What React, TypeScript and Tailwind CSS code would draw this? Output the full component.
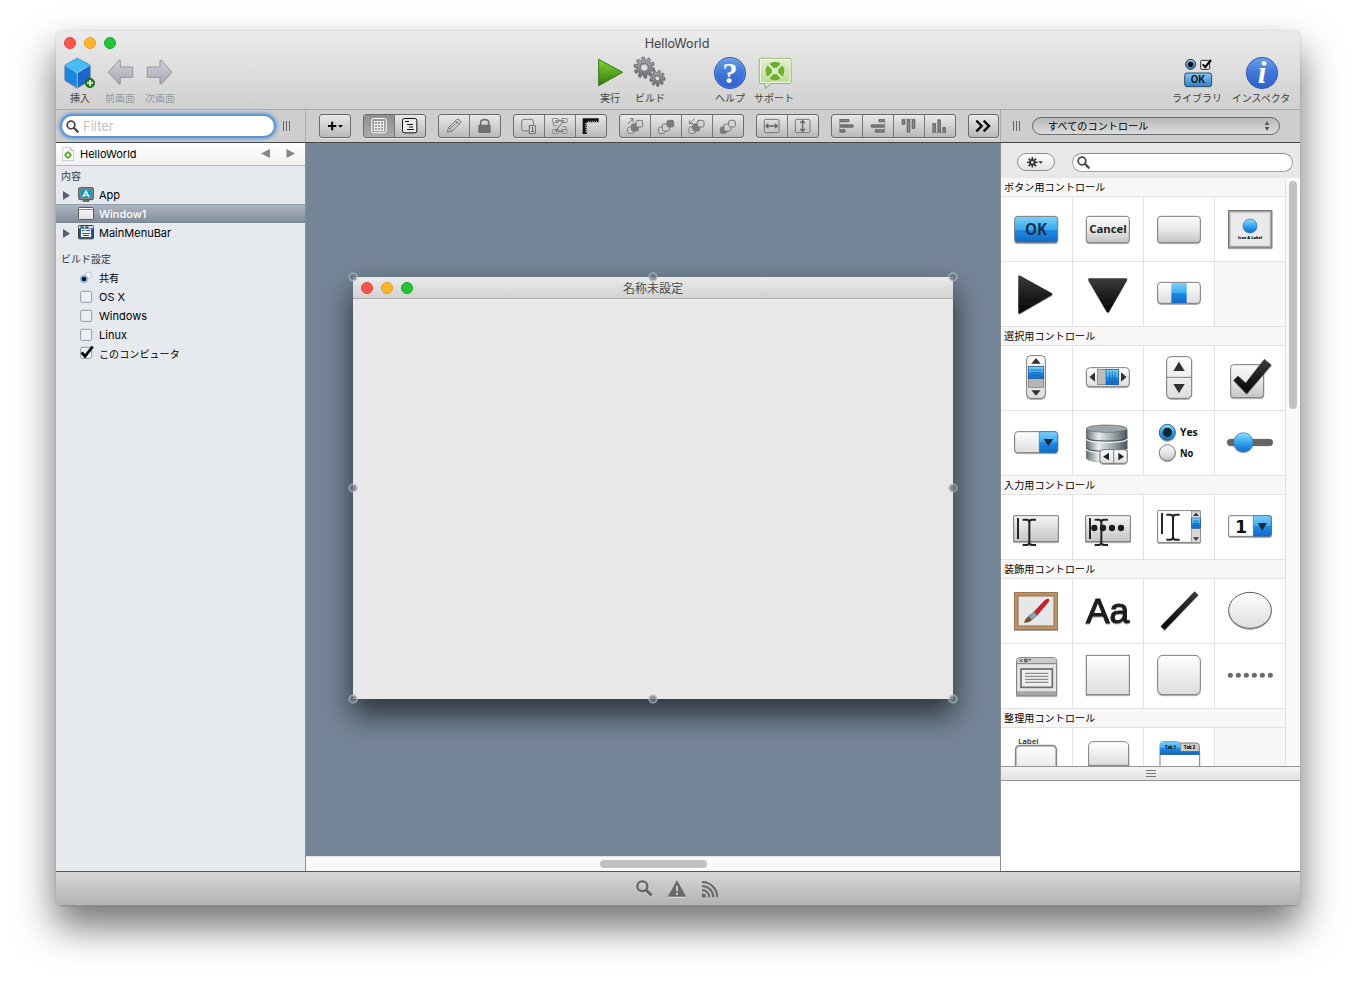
import React from "react";

/* Drawings use a unit of one third of a pixel: a 120-unit view box is 40px wide. */
function Art({ x, y, w, h, children, className = "" }: { x: number; y: number; w: number; h: number; children?: React.ReactNode; className?: string }) {
  return (
    <svg viewBox={`${x} ${y} ${w} ${h}`} width={w / 3} height={h / 3} className={"block shrink-0 " + className}>
      {children}
    </svg>
  );
}

function gearPath(cx: number, cy: number, teeth: number, r1: number, r2: number, turn = 0) {
  const pts: string[] = [];
  const step = (Math.PI * 2) / teeth;
  for (let i = 0; i < teeth; i++) {
    const a = i * step + turn;
    [[-0.3, r1], [-0.2, r2], [0.2, r2], [0.3, r1]].forEach(([k, r]) => {
      pts.push(`${(cx + Math.cos(a + k * step) * r).toFixed(1)} ${(cy + Math.sin(a + k * step) * r).toFixed(1)}`);
    });
  }
  return "M" + pts.join("L") + "Z";
}

const V = ({ id, stops }: { id: string; stops: [number, string][] }) => (
  <linearGradient id={id} x1="0" y1="0" x2="0" y2="1">
    {stops.map(([o, c], i) => <stop key={i} offset={o} stopColor={c} />)}
  </linearGradient>
);

function Gradients() {
  return (
    <svg className="absolute h-0 w-0" aria-hidden="true">
      <defs>
        <V id="blue" stops={[[0, "#7fd0f7"], [0.5, "#3aaaf0"], [0.52, "#1f8ce2"], [1, "#1268c8"]]} />
        <V id="grey" stops={[[0, "#fbfbfb"], [0.5, "#e8e8e8"], [1, "#c4c4c4"]]} />
        <V id="pale" stops={[[0, "#fefefe"], [1, "#dedede"]]} />
        <V id="black" stops={[[0, "#3a3a3a"], [1, "#050505"]]} />
        <V id="arrow" stops={[[0, "#cfcfd8"], [1, "#a9a9b6"]]} />
        <V id="green" stops={[[0, "#7fd335"], [0.5, "#58a820"], [1, "#2f7c0c"]]} />
        <V id="badge" stops={[[0, "#6ba0e4"], [0.5, "#3f77d8"], [1, "#3160cc"]]} />
        <V id="gear" stops={[[0, "#a9adb2"], [1, "#6d7278"]]} />
        <V id="support" stops={[[0, "#e5efcf"], [1, "#b4d48a"]]} />
        <V id="ok" stops={[[0, "#8cc9ee"], [1, "#2f7ec6"]]} />
        <V id="knob" stops={[[0, "#8fe0fb"], [0.5, "#36a6ee"], [1, "#1469cc"]]} />
        <V id="bar" stops={[[0, "#f6f6f6"], [1, "#c4c4c4"]]} />
        <linearGradient id="metal"><stop offset="0" stopColor="#5f696d" /><stop offset="0.3" stopColor="#e9eeef" /><stop offset="0.6" stopColor="#a9b1b4" /><stop offset="1" stopColor="#4b5558" /></linearGradient>
        <filter id="drop" x="-20%" y="-20%" width="140%" height="150%"><feDropShadow dx="0" dy="3" stdDeviation="2" floodOpacity="0.35" /></filter>
      </defs>
    </svg>
  );
}

function Lights({ className = "" }: { className?: string }) {
  return (
    <div className={"flex gap-2 " + className}>
      <span className="h-3 w-3 rounded-full border border-[#e0443e] bg-[#ff544d]" />
      <span className="h-3 w-3 rounded-full border border-[#dea02a] bg-[#ffb429]" />
      <span className="h-3 w-3 rounded-full border border-[#17a52c] bg-[#25c437]" />
    </div>
  );
}

function Tool({ label, width, x, y = 75, w, dim, children }: { label: string; width: string; x: number; y?: number; w: number; dim?: boolean; children: React.ReactNode }) {
  return (
    <div className={"flex shrink-0 flex-col items-center " + width}>
      <Art x={x} y={y} w={w} h={108}>{children}</Art>
      <span className={"whitespace-nowrap text-[10px] leading-[14px] " + (dim ? "text-[#9c9c9c]" : "text-[#444]")}>{label}</span>
    </div>
  );
}

function Header() {
  return (
    <header className="h-[79px] shrink-0 border-b border-[#ababab] bg-linear-to-b from-[#ebebeb] to-[#d0d0d0]">
      <div className="flex h-6 items-center pl-2">
        <Lights />
        <h1 className="ml-[-62px] flex-1 pt-[2px] text-center text-[12.6px] leading-5 text-[#444]">HelloWorld</h1>
      </div>
      <div className="flex pl-1">
        <Tool label="挿入" width="w-10" x={30} y={90} w={120}>
          <g filter="url(#drop)">
            <path d="M82 100 120 120 V164 L82 187 45 164 V120Z" fill="#2a93e8" stroke="#1256a0" strokeWidth="2" />
            <path d="M82 100 120 120 82 144 45 120Z" fill="#46bdf2" />
            <path d="M45 120 82 144V187L45 164Z" fill="#1e86e2" />
            <path d="M120 120 82 144V187L120 164Z" fill="#1a66cc" />
            <path d="M45 120 82 144 120 120M82 144V187" fill="none" stroke="#8fd9fa" strokeWidth="2.5" />
          </g>
          <circle cx="120" cy="174" r="14" fill="#257a14" stroke="#145008" strokeWidth="2" />
          <path d="M120 165v18M111 174h18" stroke="#fff" strokeWidth="5" />
        </Tool>
        <Tool label="前画面" width="w-10" x={150} y={90} w={120} dim>
          <path d="M175 142 207 106H211V126H248V157H211V177H207Z" fill="url(#arrow)" stroke="#8b8b94" strokeWidth="2.5" strokeLinejoin="round" />
        </Tool>
        <Tool label="次画面" width="w-10" x={270} y={90} w={120} dim>
          <path d="M366 142 334 106H330V126H292V157H330V177H334Z" fill="url(#arrow)" stroke="#8b8b94" strokeWidth="2.5" strokeLinejoin="round" />
        </Tool>
        <Tool label="実行" width="w-10 ml-[410px]" x={30} w={120}>
          <path d="M56 88 128 127 56 167Z" fill="url(#green)" stroke="#39771a" strokeWidth="3" strokeLinejoin="round" />
        </Tool>
        <Tool label="ビルド" width="w-10" x={150} w={120}>
          <g fill="url(#gear)" stroke="#55595e" strokeWidth="2" fillRule="evenodd" filter="url(#drop)">
            <path d={gearPath(193, 112, 10, 22, 31, 0.2) + "M205 112a12 12 0 1 0-24 0a12 12 0 1 0 24 0Z"} />
            <path d={gearPath(232, 144, 9, 16, 23, 0.1) + "M240 144a8 8 0 1 0-16 0a8 8 0 1 0 16 0Z"} />
          </g>
        </Tool>
        <Tool label="ヘルプ" width="w-10 ml-10" x={390} w={120}>
          <circle cx="450" cy="129" r="47" fill="url(#badge)" stroke="#2d50a8" strokeWidth="2.5" />
          <circle cx="450" cy="129" r="44" fill="none" stroke="#8db4ec" strokeWidth="1.5" opacity=".6" />
          <text x="450" y="160" textAnchor="middle" fontSize="90" fontWeight="700" fill="#fff" className="font-['Liberation_Serif',serif]">?</text>
        </Tool>
        <Tool label="サポート" width="w-12" x={510} w={144}>
          <path d="M542 85H629Q633 85 633 89V156Q633 160 629 160H574L556 176V160H542Q538 160 538 156V89Q538 85 542 85Z" fill="url(#support)" stroke="#79a850" strokeWidth="2.5" />
          <path d="M541 157V88H630V157H571L559 168V157Z" fill="none" stroke="#f5faee" strokeWidth="3" />
          <circle cx="585" cy="123" r="28" fill="#69b12c" />
          <circle cx="585" cy="123" r="10" fill="#d9e9bf" />
          <path d="M564 102 606 144M606 102 564 144" stroke="#dcebc4" strokeWidth="7" />
        </Tool>
        <Tool label="ライブラリ" width="w-[50px] ml-[374px]" x={516} w={150}>
          <circle cx="572" cy="103" r="15" fill="url(#ok)" stroke="#243746" strokeWidth="3" />
          <circle cx="572" cy="103" r="8" fill="#000" />
          <rect x="602" y="91" width="27" height="27" rx="3" fill="#e6e6e6" stroke="#333" strokeWidth="3" />
          <path d="M608 103 616 111 633 90" fill="none" stroke="#000" strokeWidth="6" />
          <rect x="554" y="129" width="81" height="41" rx="7" fill="url(#ok)" stroke="#2b4a66" strokeWidth="3" />
          <text x="594" y="160" textAnchor="middle" fontSize="29" fontWeight="700" fill="#0b1a28">OK</text>
        </Tool>
        <Tool label="インスペクタ" width="w-16 ml-[7px]" x={687} w={192}>
          <circle cx="786" cy="129" r="47" fill="url(#badge)" stroke="#2d50a8" strokeWidth="2.5" />
          <text x="786" y="160" textAnchor="middle" fontSize="94" fontWeight="700" fontStyle="italic" fill="#fff" className="font-['Liberation_Serif',serif]">i</text>
        </Tool>
      </div>
    </header>
  );
}

function Group({ className = "", children }: { className?: string; children: React.ReactNode }) {
  return <div className={"flex h-6 shrink-0 overflow-hidden rounded-[3px] border border-[#6b6b6b] bg-linear-to-b from-[#e9e9e9] to-[#b9b9b9] shadow-[0_1px_0_rgba(255,255,255,.45)] " + className}>{children}</div>;
}

/* One toolbar button: x is the left edge of its drawing; the drawing is 22px high. */
function Btn({ x, on, last, children }: { x: number; on?: boolean; last?: boolean; children: React.ReactNode }) {
  return (
    <div className={(last ? "" : "border-r border-[#757575] ") + (on ? "bg-linear-to-b from-[#8f8f8f] to-[#aaaaaa]" : "")}>
      <Art x={x} y={30} w={90} h={66}>{children}</Art>
    </div>
  );
}

const Grip = ({ className = "" }: { className?: string }) => (
  <div className={"flex h-[10px] shrink-0 gap-[2px] " + className}>
    <span className="w-px bg-[#666]" /><span className="w-px bg-[#666]" /><span className="w-px bg-[#666]" />
  </div>
);

const Glass = ({ className = "" }: { className?: string }) => (
  <svg viewBox="0 0 39 39" className={"h-[13px] w-[13px] shrink-0 " + className} fill="none" stroke="#4a4a4a">
    <circle cx="15" cy="15" r="11.5" strokeWidth="5.5" />
    <path d="M24 24 35 35" strokeWidth="7" strokeLinecap="round" />
  </svg>
);

/* Three overlapping tiles of the stacking-order buttons. */
function Stack({ x, y, solid, arrow }: { x: number; y: number; solid: number; arrow?: "up" | "down" }) {
  const fill = (i: number) => (solid === i ? "#7d7d7d" : "#d2d2d2");
  return (
    <g stroke="#777" strokeWidth="3">
      <rect x={x} y={y + 20} width="19" height="19" rx="5" fill={fill(0)} />
      <rect x={x + 11} y={y + 11} width="21" height="21" rx="5" fill={fill(1)} />
      <rect x={x + 25} y={y} width="20" height="20" rx="5" fill={fill(2)} />
      {arrow === "up" && <path d={`M${x + 1} ${y + 11}L${x + 16} ${y - 5}M${x + 6} ${y - 5}h10v10`} fill="none" />}
      {arrow === "down" && <path d={`M${x + 17} ${y - 5}L${x + 2} ${y + 9}M${x + 1} ${y}v10h11`} fill="none" />}
    </g>
  );
}

function Toolbar() {
  return (
    <div className="flex h-[33px] shrink-0 items-center border-b border-[#454545] bg-[#cecece]">
      <div className="flex h-full w-[250px] shrink-0 items-center border-r border-[#b0b0b0] pl-[6px]">
        <div className="flex h-5 w-[212px] items-center rounded-full bg-white pl-[4px] shadow-[0_0_2px_2px_#5b91cd,0_0_4px_3px_#7ba9d8]">
          <Glass />
          <span className="ml-1 text-[13px] leading-5 text-[#c0c0c0]">Filter</span>
        </div>
        <Grip className="ml-[9px]" />
      </div>
      <div className="flex h-full w-[695px] shrink-0 items-center gap-3 border-r border-[#a8a8a8] pl-[13px]">
        <Group>
          <Btn x={30} last>
            <path d="M54 63h25M66.500 50v26" stroke="#000" strokeWidth="6" />
            <path d="M84 60h15l-7.500 8Z" fill="#000" />
          </Btn>
        </Group>
        <Group>
          <Btn x={162} on>
            <rect x="185.500" y="40.500" width="43" height="43" rx="5" fill="none" stroke="#fff" strokeWidth="3" />
            <path d="M192 49.500h30M192 58.500h30M192 67.500h30M192 76.500h30M193.500 48v30M202.500 48v30M211.500 48v30M220.500 48v30" stroke="#fff" strokeWidth="2.500" />
          </Btn>
          <Btn x={256} last>
            <rect x="278.500" y="40.500" width="43" height="43" rx="6" fill="#ececec" stroke="#111" strokeWidth="3" />
            <path d="M286 49.500h12M292 58.500h18M298 66h12M292 73.500h21" stroke="#111" strokeWidth="3" fill="none" />
          </Btn>
        </Group>
        <Group>
          <Btn x={387}>
            <g stroke="#777" strokeWidth="3" fill="none" strokeLinejoin="round">
              <path d="M412 82 416 67 440 44Q445 41 450 46T451 54L427 78ZM416 67 427 78M420 71 446 48M436 48 447 58" />
            </g>
          </Btn>
          <Btn x={481} last>
            <rect x="506" y="59" width="37" height="25" rx="3" fill="#707070" />
            <path d="M513 60V52Q513 44 525 44T537 52V60" fill="none" stroke="#707070" strokeWidth="5" />
          </Btn>
        </Group>
        <Group>
          <Btn x={612}>
            <rect x="635" y="43" width="35" height="35" rx="7" fill="none" stroke="#777" strokeWidth="3" />
            <rect x="658" y="62" width="18" height="23" fill="#ddd" stroke="#666" strokeWidth="3" />
            <path d="M664 69l4-2v12M663 79h9" fill="none" stroke="#555" strokeWidth="3" />
          </Btn>
          <Btn x={706}>
            <g fill="none" stroke="#8d8d8d" strokeWidth="3">
              <rect x="728.500" y="40.500" width="18" height="12" rx="2" /><rect x="755.500" y="40.500" width="17" height="12" rx="2" />
              <rect x="728.500" y="73.500" width="18" height="12" rx="2" /><rect x="755.500" y="73.500" width="17" height="12" rx="2" />
              <path d="M731 53V62H742M769 72V65H758" />
              <path d="M736 47.500h27L737 78.500h27" stroke="#6b6b6b" />
            </g>
          </Btn>
          <Btn x={799} last>
            <path d="M819 40H867V52H831V87H819Z" fill="#111" />
            <path d="M836 50h30" stroke="#ddd" strokeWidth="5" strokeDasharray="2 4" />
            <path d="M829 55v30" stroke="#ddd" strokeWidth="5" strokeDasharray="2 4" />
          </Btn>
        </Group>
        <Group>
          <Btn x={930}><Stack x={953} y={46} solid={1} arrow="up" /></Btn>
          <Btn x={3}><Stack x={26} y={46} solid={2} /></Btn>
          <Btn x={97}><Stack x={118} y={46} solid={1} arrow="down" /></Btn>
          <Btn x={190} last><Stack x={212} y={46} solid={0} /></Btn>
        </Group>
        <Group>
          <Btn x={322}>
            <rect x="344" y="43" width="44" height="40" rx="4" fill="none" stroke="#777" strokeWidth="3" />
            <path d="M350 63h32M356 56l-7 7 7 7M376 56l7 7-7 7" fill="none" stroke="#666" strokeWidth="4" />
          </Btn>
          <Btn x={415} last>
            <rect x="437" y="43" width="44" height="40" rx="4" fill="none" stroke="#777" strokeWidth="3" />
            <path d="M459 48v30M452 54l7-7 7 7M452 72l7 7 7-7" fill="none" stroke="#666" strokeWidth="4" />
          </Btn>
        </Group>
        <Group>
          <Btn x={547}>
            <path d="M570 41v42" stroke="#777" strokeWidth="2" />
            <g fill="#909090" stroke="#6c6c6c" strokeWidth="4"><rect x="572" y="44" width="26" height="6" rx="2" /><rect x="572" y="60" width="38" height="6" rx="2" /><rect x="572" y="75" width="14" height="6" rx="2" /></g>
          </Btn>
          <Btn x={640}>
            <path d="M705 41v42" stroke="#777" strokeWidth="2" />
            <g fill="#909090" stroke="#6c6c6c" strokeWidth="4"><rect x="688" y="44" width="15" height="6" rx="2" /><rect x="665" y="60" width="38" height="6" rx="2" /><rect x="677" y="75" width="26" height="6" rx="2" /></g>
          </Btn>
          <Btn x={734}>
            <path d="M756 43h42" stroke="#777" strokeWidth="2" />
            <g fill="#909090" stroke="#6c6c6c" strokeWidth="4"><rect x="759" y="45" width="7" height="13" rx="2" /><rect x="774" y="45" width="7" height="36" rx="2" /><rect x="789" y="45" width="7" height="25" rx="2" /></g>
          </Btn>
          <Btn x={827} last>
            <path d="M848 83h43" stroke="#777" strokeWidth="2" />
            <g fill="#909090" stroke="#6c6c6c" strokeWidth="4"><rect x="851" y="56" width="7" height="25" rx="2" /><rect x="866" y="45" width="7" height="36" rx="2" /><rect x="881" y="68" width="7" height="13" rx="2" /></g>
          </Btn>
        </Group>
        <Group className="w-[31px]">
          <Btn x={957} last>
            <path d="M979 47 995 63 979 79M1001 47 1017 63 1001 79" fill="none" stroke="#000" strokeWidth="7" />
          </Btn>
        </Group>
      </div>
      <Grip className="ml-[12px]" />
      <div className="ml-[12px] flex h-[18px] w-[248px] items-center justify-between rounded-full border border-[#6a6a6a] bg-linear-to-b from-[#b8b8b8] to-[#dcdcdc] pl-[15px] pr-[9px] text-[10px] tracking-[0.15px] text-black">
        <span>すべてのコントロール</span>
        <svg viewBox="0 0 18 30" className="h-[10px] w-[6px]" fill="#555"><path d="M9 0 16 12H2ZM9 30 16 18H2Z" /></svg>
      </div>
    </div>
  );
}

function Row({ label, icon, expand, selected, option }: { label: string; icon: React.ReactNode; expand?: boolean; selected?: boolean; option?: boolean }) {
  return (
    <div className={"flex h-[19px] items-center pl-[7px] text-[11px] " + (selected ? "border-y border-b-[#7b8794] border-t-[#949dab] bg-linear-to-b from-[#adb5c0] to-[#838e9c] font-medium text-white" : "text-black")}>
      <span className="w-[15px] pt-[2px]">{expand && <svg viewBox="0 0 7 9" className="block h-[9px] w-[7px]"><path d="M0 0 7 4.500 0 9Z" fill="#5c5c78" /></svg>}</span>
      <svg viewBox="0 0 48 48" className={"h-4 w-4 shrink-0 " + (option ? "mb-[2px]" : "")}>{icon}</svg>
      <span className={"ml-[5px] whitespace-nowrap leading-[17px] " + (option ? "pb-px" : "pt-px")}>{label}</span>
    </div>
  );
}

const Box = ({ checked }: { checked?: boolean }) => (
  <>
    <rect x="8" y="7" width="33" height="33" rx="3" fill="#eceff3" stroke="#929ca8" strokeWidth="3" />
    {checked && <path d="M11 22 21 34 44 5" fill="none" stroke="#000" strokeWidth="8" />}
  </>
);

function Sidebar() {
  return (
    <aside className="flex w-[250px] shrink-0 flex-col border-r border-[#8d8d8d] bg-[#e6eaef]">
      <div className="flex h-[23px] shrink-0 items-center border-b border-[#a9b8ca] bg-linear-to-b from-white to-[#f0f1f2] pl-[6px] pr-[10px] text-[11px]">
        <svg viewBox="0 0 36 42" className="h-[14px] w-3"><path d="M2 1H25L35 11V41H2Z" fill="#fdfdfd" stroke="#b5b5b5" strokeWidth="2" /><path d="M25 1V11H35" fill="#ddd" stroke="#aaa" strokeWidth="2" /><circle cx="18" cy="24" r="7" fill="none" stroke="#5fae2b" strokeWidth="5" /><path d="M18 13v4M18 31v4M7 24h4M25 24h4" stroke="#5fae2b" strokeWidth="4" /></svg>
        <span className="ml-[6px] flex-1 text-black">HelloWorld</span>
        <svg viewBox="0 0 34 9" className="mb-px h-[9px] w-[34px]" fill="#858585"><path d="M9 0V9L0 4.500ZM25.500 0V9L34 4.500Z" /></svg>
      </div>
      <h2 className="h-[19px] pl-[5px] text-[10px] font-medium leading-[20px] text-[#555]">内容</h2>
      <Row label="App" expand icon={<><rect x="2" y="2" width="44" height="36" rx="4" fill="#888" stroke="#505050" strokeWidth="3" /><rect x="8" y="7" width="32" height="26" fill="#0c9bcb" /><path d="M15 30 24 12 33 30M14 25h20" fill="none" stroke="#fff" strokeWidth="4" /><path d="M14 42h20" stroke="#444" strokeWidth="4" /></>} />
      <Row label="Window1" selected icon={<><rect x="1.500" y="4.500" width="45" height="36" rx="3" fill="url(#pale)" stroke="#5c5c5c" strokeWidth="3" /><path d="M3 10.500h42" stroke="#8a8a8a" strokeWidth="3" /></>} />
      <Row label="MainMenuBar" expand icon={<><rect x="1.500" y="1.500" width="45" height="40" rx="3" fill="#2456a6" stroke="#3b3b3b" strokeWidth="3" /><rect x="2" y="3" width="44" height="7" fill="#ddd" /><path d="M7 6.500h10M22 6.500h9" stroke="#222" strokeWidth="4" /><rect x="9" y="12" width="30" height="24" fill="#fff" /><path d="M12 16.500h8M24 16.500h12M12 25.500h24M15 31.500h18" stroke="#1d4ed8" strokeWidth="3" /></>} />
      <h2 className="mt-2 h-[19px] pl-[5px] text-[10px] font-medium leading-[19px] text-[#555]">ビルド設定</h2>
      <div>
        <div className="flex h-[19px] items-center pl-[22px]">
          <svg viewBox="0 0 48 48" className="mb-[2px] h-4 w-4"><circle cx="31" cy="16" r="10" fill="#f4f4f4" stroke="#a8adb3" strokeWidth="2" /><circle cx="18" cy="27" r="12" fill="#7fb8dc" /><circle cx="18" cy="27" r="7" fill="#0b1a28" /></svg>
          <span className="ml-[5px] text-[10px]">共有</span>
        </div>
        <Row label="OS X" option icon={<Box />} />
        <Row label="Windows" option icon={<Box />} />
        <Row label="Linux" option icon={<Box />} />
        <div className="flex h-[19px] items-center pl-[22px]">
          <svg viewBox="0 0 48 48" className="mb-[3px] h-4 w-4"><Box checked /></svg>
          <span className="ml-[5px] text-[10px] tracking-[0.1px]">このコンピュータ</span>
        </div>
      </div>
    </aside>
  );
}

const handleSpots = [
  "left-[-4px] top-[-4px]", "left-[296px] top-[-4px]", "left-[596px] top-[-4px]",
  "left-[-4px] top-[207px]", "left-[596px] top-[207px]",
  "left-[-4px] top-[418px]", "left-[296px] top-[418px]", "left-[596px] top-[418px]",
];

function Canvas() {
  return (
    <main className="flex w-[694px] shrink-0 flex-col bg-[#758698]">
      <div className="min-h-0 flex-1 overflow-hidden pl-[47px] pt-[134px]">
        <div className="relative flex h-[422px] w-[600px] flex-col bg-[#e8e8e8] shadow-[0_15px_27px_2px_rgba(0,0,0,.6)]">
          <div className="flex h-[22px] items-center border-b border-[#b0b0b0] bg-linear-to-b from-[#ebebeb] to-[#d2d2d2] pl-2">
            <Lights />
            <span className="ml-[-60px] flex-1 pt-[2px] text-center text-[12px] leading-5 text-[#4a4a4a]">名称未設定</span>
          </div>
          {handleSpots.map((s) => (
            <span key={s} className={"absolute h-2 w-2 rounded-full border border-[#b9c0c8]/70 bg-[#6b7682]/75 shadow-[0_0_0_1px_rgba(185,192,200,.4)] " + s} />
          ))}
        </div>
      </div>
      <div className="flex h-[15px] shrink-0 items-center border-t border-[#e4e4e4] bg-[#fafafa] pl-[294px]">
        <span className="h-2 w-[107px] rounded-full bg-[#c1c1c1]" />
      </div>
    </main>
  );
}

const Section = ({ title }: { title: string }) => (
  <h3 className="h-[19px] shrink-0 border-b border-r border-[#e2e2e2] bg-[#f7f7f7] pl-[3px] text-[10px] leading-[18px] tracking-[0.15px] text-black">{title}</h3>
);

const colX = [3, 219, 432, 645];
function Cells({ y, items }: { y: number; items: (React.ReactNode | null)[] }) {
  return (
    <div className="flex h-[65px] shrink-0">
      {items.map((it, i) => (
        <div key={i} className={"h-[65px] border-b border-r border-[#e2e2e2] " + (it ? "bg-white" : "bg-[#f7f7f7]")}>
          <Art x={colX[i]} y={y} w={i === 0 ? 213 : 210} h={192}>{it}</Art>
        </div>
      ))}
    </div>
  );
}

const S = { stroke: "#7c7c7c", strokeWidth: 3 };
const Caret = ({ x, y, h = 76 }: { x: number; y: number; h?: number }) => (
  <path d={`M${x - 20} ${y}H${x - 8}Q${x} ${y} ${x} ${y + 9}Q${x} ${y} ${x + 8} ${y}H${x + 20}M${x} ${y + 7}V${y + h - 7}M${x - 20} ${y + h}H${x - 8}Q${x} ${y + h} ${x} ${y + h - 9}Q${x} ${y + h} ${x + 8} ${y + h}H${x + 20}`} fill="none" stroke="#222" strokeWidth="6" />
);
const Btn3 = ({ x, y, w, h, r = 9, fill = "url(#grey)" }: { x: number; y: number; w: number; h: number; r?: number; fill?: string }) => (
  <rect x={x} y={y} width={w} height={h} rx={r} fill={fill} {...S} filter="url(#drop)" />
);

function Library() {
  const lucida = "font-['Open_Sans',sans-serif]";
  return (
    <aside className="flex w-[300px] shrink-0 flex-col border-l border-[#8d8d8d] bg-white">
      <div className="flex h-[35px] shrink-0 items-center bg-[#e8e8e8] pl-4 pt-[3px]">
        <div className="flex h-[18px] w-[38px] items-center rounded-full border border-[#8e8e8e] bg-linear-to-b from-white to-[#e3e3e3] pl-[9px]">
          <svg viewBox="0 0 51 33" className="h-[11px] w-[17px]"><path fillRule="evenodd" d={gearPath(16, 16, 8, 10, 16, 0) + "M20 16a4 4 0 1 0-8 0a4 4 0 1 0 8 0Z"} fill="#333" /><path d="M34 13h14l-7 7Z" fill="#333" /></svg>
        </div>
        <div className="ml-[17px] flex h-[19px] w-[221px] items-center rounded-full border border-[#a3a3a3] border-t-[#8a8a8a] bg-white pl-[4px]"><Glass /></div>
      </div>
      <div className="flex h-[588px] shrink-0 overflow-hidden">
        <div className="flex w-[285px] shrink-0 flex-col">
          <Section title="ボタン用コントロール" />
          <Cells y={66} items={[
            <><Btn3 x={44} y={124} w={129} h={79} fill="url(#blue)" /><text x="75" y="180" fontSize="46" fontWeight="700" fill="#16334f" textLength="66" lengthAdjust="spacingAndGlyphs" className={lucida}>OK</text></>,
            <><Btn3 x={259} y={124} w={129} h={79} /><text x="324" y="174" textAnchor="middle" fontSize="34" fontWeight="700" fill="#222" textLength="112" className={lucida}>Cancel</text></>,
            <Btn3 x={473} y={124} w={128} h={79} />,
            <><rect x="688" y="109" width="125" height="107" fill="#eaeaea" stroke="#a8a8a8" strokeWidth="7" filter="url(#drop)" /><rect x="685.500" y="106.500" width="130" height="112" fill="none" stroke="#777" strokeWidth="3" /><circle cx="750" cy="153" r="21" fill="url(#knob)" stroke="#2d6ba3" strokeWidth="2" /><text x="714" y="193" fontSize="12" fontWeight="800" textLength="72" lengthAdjust="spacingAndGlyphs" className={lucida}>Icon &amp; Label</text></>,
          ]} />
          <Cells y={261} items={[
            <path d="M55 302Q56 299 61 302L156 355Q159 357 156 360L61 415Q56 418 55 413Z" fill="url(#black)" filter="url(#drop)" />,
            <path d="M267 310H379Q384 311 381 316L327 410Q323 414 320 410L265 316Q263 311 267 310Z" fill="url(#black)" filter="url(#drop)" />,
            <><Btn3 x={473} y={322} w={128} h={63} r={10} fill="url(#pale)" /><rect x="514" y="324" width="46" height="60" fill="url(#blue)" /></>,
            null,
          ]} />
          <Section title="選択用コントロール" />
          <Cells y={63} items={[
            <><Btn3 x={80} y={92} w={56} h={128} r={12} fill="url(#pale)" /><path d="M94 116 108 99 122 116ZM94 196 108 212 122 196Z" fill="#333" /><rect x="85" y="125" width="46" height="62" fill="#b5b5b5" stroke="#777" strokeWidth="2" /><rect x="85" y="125" width="46" height="36" fill="url(#blue)" stroke="#17569b" strokeWidth="2" /><path d="M91 135h34M91 143h34M91 151h34" stroke="#16579f" strokeWidth="2" /></>,
            <><Btn3 x={259} y={128} w={129} h={57} r={12} fill="url(#pale)" /><path d="M285 142 268 156 285 170ZM363 142 380 156 363 170Z" fill="#333" /><rect x="292" y="133" width="64" height="46" fill="#bdbdbd" stroke="#777" strokeWidth="2" /><rect x="318" y="133" width="38" height="46" fill="url(#blue)" stroke="#17569b" strokeWidth="2" /><path d="M329 139v34M337 139v34M345 139v34" stroke="#16579f" strokeWidth="2" /></>,
            <><Btn3 x={500} y={95} w={75} h={125} r={13} fill="url(#pale)" /><path d="M501 157H574" {...S} /><path d="M520 138 537 110 554 138ZM520 177 537 205 554 177Z" fill="#333" /></>,
            <><Btn3 x={692} y={119} w={99} h={99} r={9} /><path d="M701 166 714 153 737 174 793 103 814 120 740 206Z" fill="url(#black)" stroke="#333" strokeWidth="3" strokeDasharray="2 2" filter="url(#drop)" /></>,
          ]} />
          <Cells y={258} items={[
            <><Btn3 x={44} y={320} w={129} h={63} fill="url(#pale)" /><path d="M118 320H164Q173 320 173 329V374Q173 383 164 383H118Z" fill="url(#blue)" stroke="#2b6fa9" strokeWidth="2" /><path d="M131 342H160L145 364Z" fill="#182c40" /></>,
            <><g filter="url(#drop)"><path d="M258 312V397Q260 410 320 410T382 397V312Z" fill="url(#metal)" /><path d="M258 341Q262 352 320 352T382 341M258 372Q262 383 320 383T382 372" fill="none" stroke="#edf2f3" strokeWidth="4" /><path d="M258 337Q262 348 320 348T382 337M258 368Q262 379 320 379T382 368" fill="none" stroke="#465053" strokeWidth="3" /><ellipse cx="320" cy="311" rx="61" ry="11" fill="#9da7ab" stroke="#586266" strokeWidth="2" /></g><Btn3 x={300} y={374} w={82} h={41} fill="url(#pale)" /><path d="M341 375V414" {...S} /><path d="M327 383V406L309 395ZM355 383V406L372 395Z" fill="#222" /></>,
            <><circle cx="502" cy="322" r="24" fill="url(#knob)" stroke="#37617f" strokeWidth="3" filter="url(#drop)" /><circle cx="502" cy="322" r="14" fill="#082536" /><circle cx="502" cy="383" r="24" fill="url(#grey)" {...S} filter="url(#drop)" /><g fontSize="30" fontWeight="700" fill="#111" className={lucida}><text x="540" y="333" textLength="53" lengthAdjust="spacingAndGlyphs">Yes</text><text x="540" y="396" textLength="40" lengthAdjust="spacingAndGlyphs">No</text></g></>,
            <><rect x="682" y="343" width="136" height="19" rx="9" fill="#646464" stroke="#4b4b4b" strokeWidth="2" /><circle cx="730" cy="352" r="29" fill="url(#knob)" stroke="#2674b8" strokeWidth="2" filter="url(#drop)" /></>,
          ]} />
          <Section title="入力用コントロール" />
          <Cells y={60} items={[
            <><Btn3 x={41} y={122} w={134} h={78} r={1} fill="url(#bar)" /><path d="M54 129V192" stroke="#000" strokeWidth="5" /><Caret x={88} y={134} /></>,
            <><Btn3 x={257} y={122} w={134} h={78} r={1} fill="url(#bar)" /><path d="M270 129V192" stroke="#000" strokeWidth="5" />{[283, 309, 336, 363].map((c) => <circle key={c} cx={c} cy="159" r="9.500" fill="#1c1c1c" />)}<Caret x={304} y={134} /></>,
            <><Btn3 x={473} y={107} w={128} h={95} r={2} fill="url(#pale)" /><rect x="475" y="109" width="98" height="91" fill="#fff" /><path d="M486 114V177" stroke="#000" strokeWidth="5" /><Caret x={519} y={119} h={75} /><rect x="574" y="108" width="27" height="94" fill="#d6d6d6" stroke="#888" strokeWidth="2" /><rect x="575" y="129" width="26" height="31" fill="url(#blue)" stroke="#17569b" strokeWidth="2" /><path d="M580 138h16M580 145h16M580 152h16" stroke="#16579f" strokeWidth="2" /><path d="M579 123 588 113 597 123ZM579 187 588 197 597 187Z" fill="#333" /></>,
            <><Btn3 x={686} y={122} w={128} h={62} r={3} fill="#fff" /><path d="M760 122H804Q814 122 814 132V175Q814 184 804 184H760Z" fill="url(#blue)" stroke="#2b6fa9" strokeWidth="2" /><path d="M773 144H801L787 167Z" fill="#132c3d" /><text x="723" y="173" textAnchor="middle" fontSize="52" fontWeight="700" fill="#111" className="font-['DejaVu_Sans',sans-serif]">1</text></>,
          ]} />
          <Section title="装飾用コントロール" />
          <Cells y={312} items={[
            <><rect x="48" y="357" width="120" height="102" fill="#e7e7e7" stroke="#bd9165" strokeWidth="12" filter="url(#drop)" /><rect x="43" y="352" width="130" height="112" fill="none" stroke="#916a45" strokeWidth="2" /><rect x="54" y="363" width="108" height="90" fill="none" stroke="#90704f" strokeWidth="3" /><path d="M102 411 132 379Q142 370 146 373T139 388L111 421Z" fill="#cf2029" stroke="#8f1118" strokeWidth="2" /><path d="M84 425 102 411 111 421 96 434Z" fill="#8fa0ab" stroke="#606d75" strokeWidth="2" /><path d="M72 443Q76 428 86 425L96 434Q91 443 72 443Z" fill="#77542f" /></>,
            <text x="323" y="445" textAnchor="middle" fontSize="103" textLength="130" lengthAdjust="spacingAndGlyphs" fill="#1c1c1c" stroke="#1c1c1c" strokeWidth="3" filter="url(#drop)" className="font-['Liberation_Sans',sans-serif]">Aa</text>,
            <path d="M482 454 584 349 595 360 494 465Z" fill="url(#black)" filter="url(#drop)" />,
            <ellipse cx="750" cy="406" rx="64" ry="54" fill="url(#pale)" stroke="#606060" strokeWidth="3" filter="url(#drop)" />,
          ]} />
          <Cells y={12} items={[
            <><path d="M50 167V62Q50 53 59 53H161Q170 53 170 62V167Z" fill="#e5e5e5" stroke="#777" strokeWidth="3" filter="url(#drop)" /><path d="M51 70V62Q51 54 59 54H161Q169 54 169 62V70Z" fill="#ccc" /><path d="M50 71H170M50 156H170" {...S} /><rect x="51" y="157" width="118" height="9" fill="#a5a5a5" /><path d="M60 58l7 7M67 58l-7 7M74 58h7v7h-7ZM85 59h8" fill="none" stroke="#222" strokeWidth="2.500" /><rect x="63" y="87" width="94" height="55" fill="#eee" stroke="#6c6c6c" strokeWidth="5" /><path d="M75 100h70M75 109h70M75 118h70M75 127h70" stroke="#777" strokeWidth="3" /></>,
            <Btn3 x={259} y={46} w={129} h={118} r={0} fill="url(#pale)" />,
            <Btn3 x={473} y={46} w={128} h={118} r={16} fill="url(#pale)" />,
            <>{[691, 715, 739, 763, 787, 811].map((c) => <circle key={c} cx={c} cy="106" r="7.500" fill="#6a6a6a" />)}</>,
          ]} />
          <Section title="整理用コントロール" />
          <Cells y={264} items={[
            <><text x="55" y="311" fontSize="23" textLength="60" fill="#111" stroke="#111" strokeWidth=".6" className={lucida}>Label</text><rect x="47" y="317" width="122" height="110" rx="12" fill="url(#pale)" stroke="#858585" strokeWidth="5" /></>,
            <><Btn3 x={266} y={305} w={120} h={120} r={13} fill="#ddd" /><rect x="268" y="307" width="116" height="66" rx="11" fill="url(#pale)" /><path d="M266 376H386" {...S} /></>,
            <><path d="M480 460V316Q480 305 491 305H530Q541 305 541 316V333H599V460Z" fill="#fff" {...S} /><path d="M541 335V309H589Q598 309 598 319V335Z" fill="#ccc" {...S} /><path d="M480 343V316Q480 305 491 305H530Q541 305 541 316V334H598V343Z" fill="url(#blue)" /><path d="M480 343H599" stroke="#155a9c" strokeWidth="3" /><g fontSize="13" fontWeight="800" fill="#111" className={lucida}><text x="495" y="326" textLength="33" lengthAdjust="spacingAndGlyphs">Tab 1</text><text x="552" y="326" textLength="34" lengthAdjust="spacingAndGlyphs">Tab 2</text></g></>,
            null,
          ]} />
        </div>
        <div className="flex-1 bg-[#fafafa] pl-[3px] pt-[3px]"><div className="h-[228px] w-2 rounded-full bg-[#c1c1c1]" /></div>
      </div>
      <div className="flex h-[15px] shrink-0 flex-col items-center justify-center gap-[2px] border-y border-[#949494] bg-linear-to-b from-[#f4f4f4] to-[#e3e3e3]">
        <span className="h-px w-[10px] bg-[#777]" /><span className="h-px w-[10px] bg-[#777]" /><span className="h-px w-[10px] bg-[#777]" />
      </div>
    </aside>
  );
}

function StatusBar() {
  return (
    <footer className="h-[35px] shrink-0 border-b border-t border-b-[#929292] border-t-[#565656] bg-linear-to-b from-[#d6d6d6] to-[#b3b3b3] pl-[577px]">
      <Art x={159} y={96} w={270} h={96}>
        <g transform="translate(0 3)" fill="none" stroke="#eee" opacity=".8"><circle cx="187" cy="139" r="15" strokeWidth="6" /><path d="M198 150 215 167" strokeWidth="9" /><path d="M264 170 291 121 319 170Z" fill="#eee" stroke="none" /></g>
        <circle cx="187" cy="139" r="15" fill="none" stroke="#666" strokeWidth="7" />
        <path d="M198 150 215 167" stroke="#666" strokeWidth="9" />
        <path d="M263 170 291 121 319 170Z" fill="#686868" />
        <path d="M291 137v17M291 158v7" stroke="#ddd" strokeWidth="5" />
        <path d="M366 150A22 22 0 0 1 388 172M366 138A34 34 0 0 1 400 172M366 126A46 46 0 0 1 412 172" fill="none" stroke="#686868" strokeWidth="6" />
        <path d="M366 160A12 12 0 0 1 378 172H366Z" fill="#686868" />
      </Art>
    </footer>
  );
}

export default function App() {
  return (
    <div className="flex h-[985px] w-[1356px] bg-white pl-14 pt-[31px] font-[Inter,'Noto_Sans_CJK_JP',sans-serif]">
      <Gradients />
      <div className="flex h-[875px] w-[1244px] flex-col overflow-hidden rounded-[5px] shadow-[0_0_1px_rgba(0,0,0,.5),0_20px_38px_1px_rgba(0,0,0,.55)]">
        <Header />
        <Toolbar />
        <div className="flex min-h-0 flex-1">
          <Sidebar />
          <Canvas />
          <Library />
        </div>
        <StatusBar />
      </div>
    </div>
  );
}
